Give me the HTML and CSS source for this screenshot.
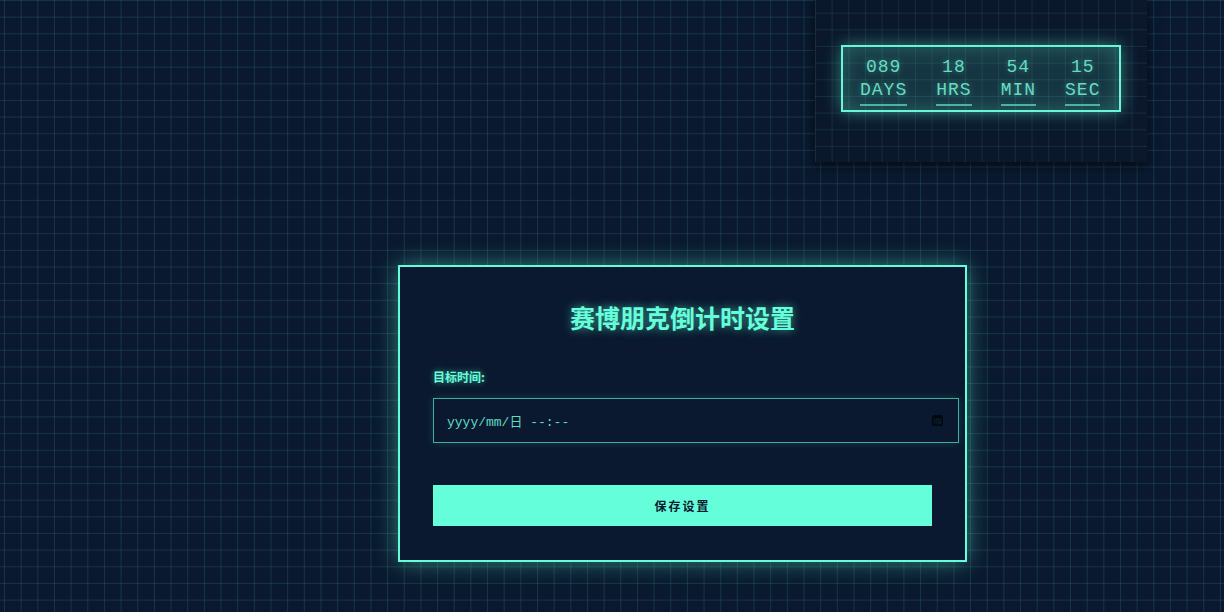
FILE: index.html
```html
<!DOCTYPE html>
<html lang="zh-CN">
<head>
<meta charset="utf-8">
<title>赛博朋克倒计时设置</title>
<link rel="stylesheet" href="styles.css">
</head>
<body>
<div class="panel">
  <div class="clock">
    <div class="unit"><div class="num">089</div><div class="lbl">DAYS</div></div>
    <div class="unit"><div class="num">18</div><div class="lbl">HRS</div></div>
    <div class="unit"><div class="num">54</div><div class="lbl">MIN</div></div>
    <div class="unit"><div class="num">15</div><div class="lbl">SEC</div></div>
  </div>
</div>
<div class="stage">
  <div class="card">
    <h1 class="title">赛博朋克倒计时设置</h1>
    <div class="field-label">目标时间:</div>
    <div class="input">
      <span class="input-text">yyyy/mm/日 --:--</span>
      <svg class="cal" width="11" height="11" viewBox="0 0 11 11"><rect x="0.75" y="0.75" width="9.5" height="9.5" rx="2" fill="none" stroke="#02070e" stroke-width="1.5"/><rect x="1" y="1" width="9" height="2.5" fill="#02070e"/><g fill="#02070e"><rect x="2.5" y="5" width="1.3" height="1.3"/><rect x="4.85" y="5" width="1.3" height="1.3"/><rect x="7.2" y="5" width="1.3" height="1.3"/><rect x="2.5" y="7.3" width="1.3" height="1.3"/><rect x="4.85" y="7.3" width="1.3" height="1.3"/></g></svg>
    </div>
    <button class="save">保存设置</button>
  </div>
</div>
</body>
</html>
```

FILE: styles.css
```css
html, body {
  margin: 0;
  padding: 0;
}
body {
  width: 1224px;
  height: 612px;
  overflow: hidden;
  position: relative;
  background-color: #0a192f;
  background-image:
    linear-gradient(rgba(100, 255, 218, 0.12) 1px, transparent 1px),
    linear-gradient(90deg, rgba(100, 255, 218, 0.12) 1px, transparent 1px);
  background-size: 16.667px 16.667px;
  background-position: 4px 0;
  font-family: "Noto Sans CJK SC", "Noto Sans", sans-serif;
}

/* top-right countdown widget */
.panel {
  position: absolute;
  left: 815px;
  top: -4px;
  width: 332px;
  height: 166px;
  box-sizing: border-box;
  padding: 49px 26px 0;
  background-color: #0b182c;
  background-image:
    linear-gradient(rgba(100, 255, 218, 0.09) 1px, transparent 1px),
    linear-gradient(90deg, rgba(100, 255, 218, 0.09) 1px, transparent 1px);
  background-size: 16.667px 16.667px;
  background-position: 0 0;
  box-shadow: 0 4px 10px rgba(0, 0, 0, 0.55);
}
.clock {
  display: flex;
  gap: 29px;
  padding: 9px 17px 4px;
  border: 2px solid #6af5d6;
  background: rgba(100, 255, 218, 0.13);
  box-shadow: 0 0 16px rgba(100, 255, 218, 0.45), inset 0 0 22px rgba(100, 255, 218, 0.25);
  font-family: "Courier New", "Liberation Mono", monospace;
  color: #66dcc2;
  text-shadow: 0 0 6px rgba(100, 255, 218, 0.4);
}
.unit {
  display: flex;
  flex-direction: column;
  align-items: center;
}
.num {
  font-size: 18px;
  line-height: 22px;
  letter-spacing: 1px;
  margin-bottom: 1px;
}
.lbl {
  font-size: 18px;
  line-height: 22px;
  letter-spacing: 1px;
  padding-bottom: 3px;
  border-bottom: 2px solid rgba(100, 255, 218, 0.6);
}

/* main card */
.stage {
  display: flex;
  padding: 265px 0 0 398px;
}
.card {
  width: 569px;
  box-sizing: border-box;
  padding: 33px 33px 34px;
  border: 2px solid #64ffda;
  background: #0a192f;
  box-shadow: 0 0 22px rgba(100, 255, 218, 0.45);
}
.title {
  margin: 0 0 33px;
  text-align: center;
  font-size: 25px;
  line-height: 35px;
  font-weight: 700;
  color: #64ffda;
  text-shadow: 0 0 10px rgba(100, 255, 218, 0.6);
}
.field-label {
  font-size: 12px;
  line-height: 17px;
  font-weight: 700;
  color: #64ffda;
  text-shadow: 0 0 6px rgba(100, 255, 218, 0.6);
  margin-bottom: 13px;
}
.input {
  width: 526px;
  height: 45px;
  box-sizing: border-box;
  display: flex;
  align-items: center;
  justify-content: space-between;
  padding: 0 15px 0 13px;
  border: 1px solid rgba(100, 255, 218, 0.65);
  background: #0a192f;
  box-shadow: 0 0 8px rgba(100, 255, 218, 0.15);
}
.input-text {
  font-family: "Courier New", "Liberation Mono", "Noto Sans CJK SC", monospace;
  font-size: 13px;
  color: #5fdcc0;
}
.cal {
  display: block;
}
.save {
  display: block;
  width: 499px;
  height: 41px;
  margin-top: 42px;
  border: none;
  background: #64ffda;
  color: #0a192f;
  font-family: "Noto Sans CJK SC", "Noto Sans", sans-serif;
  font-size: 12px;
  font-weight: 700;
  letter-spacing: 2px;
  cursor: pointer;
}
```
